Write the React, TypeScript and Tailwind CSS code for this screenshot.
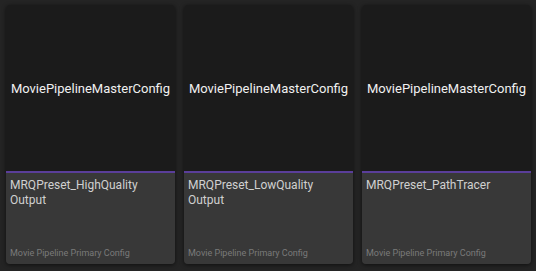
import React from "react";

const cards = [
  { title: "MRQPreset_HighQuality Output" },
  { title: "MRQPreset_LowQuality Output" },
  { title: "MRQPreset_PathTracer" },
];

export default function App() {
  return (
    <div
      className="w-[536px] h-[271px] bg-[#242424] flex gap-[9px] pl-[6px] pt-[5px]"
      style={{ fontFamily: "Roboto, 'Liberation Sans', sans-serif" }}
    >
      {cards.map((c, i) => (
        <div
          key={i}
          className="w-[169px] h-[259px] rounded-[4px] overflow-hidden flex flex-col shadow-[0_1px_4px_rgba(0,0,0,0.6)]"
        >
          <div className="h-[166px] bg-[#1b1b1b] flex items-center justify-center pt-[2px]">
            <span className="text-[13px] text-[#f0f0f0] whitespace-nowrap">
              MoviePipelineMasterConfig
            </span>
          </div>
          <div className="h-[2px] bg-[#5a3e9a]" />
          <div className="flex-1 bg-[#383838] flex flex-col px-[4px] pt-[5px] pb-[5px]">
            <div className="text-[12px] leading-[15px] text-[#d0d0d0] w-[140px]">
              {c.title}
            </div>
            <div className="mt-auto text-[9px] leading-[11px] text-[#7a7a7a]">
              Movie Pipeline Primary Config
            </div>
          </div>
        </div>
      ))}
    </div>
  );
}
